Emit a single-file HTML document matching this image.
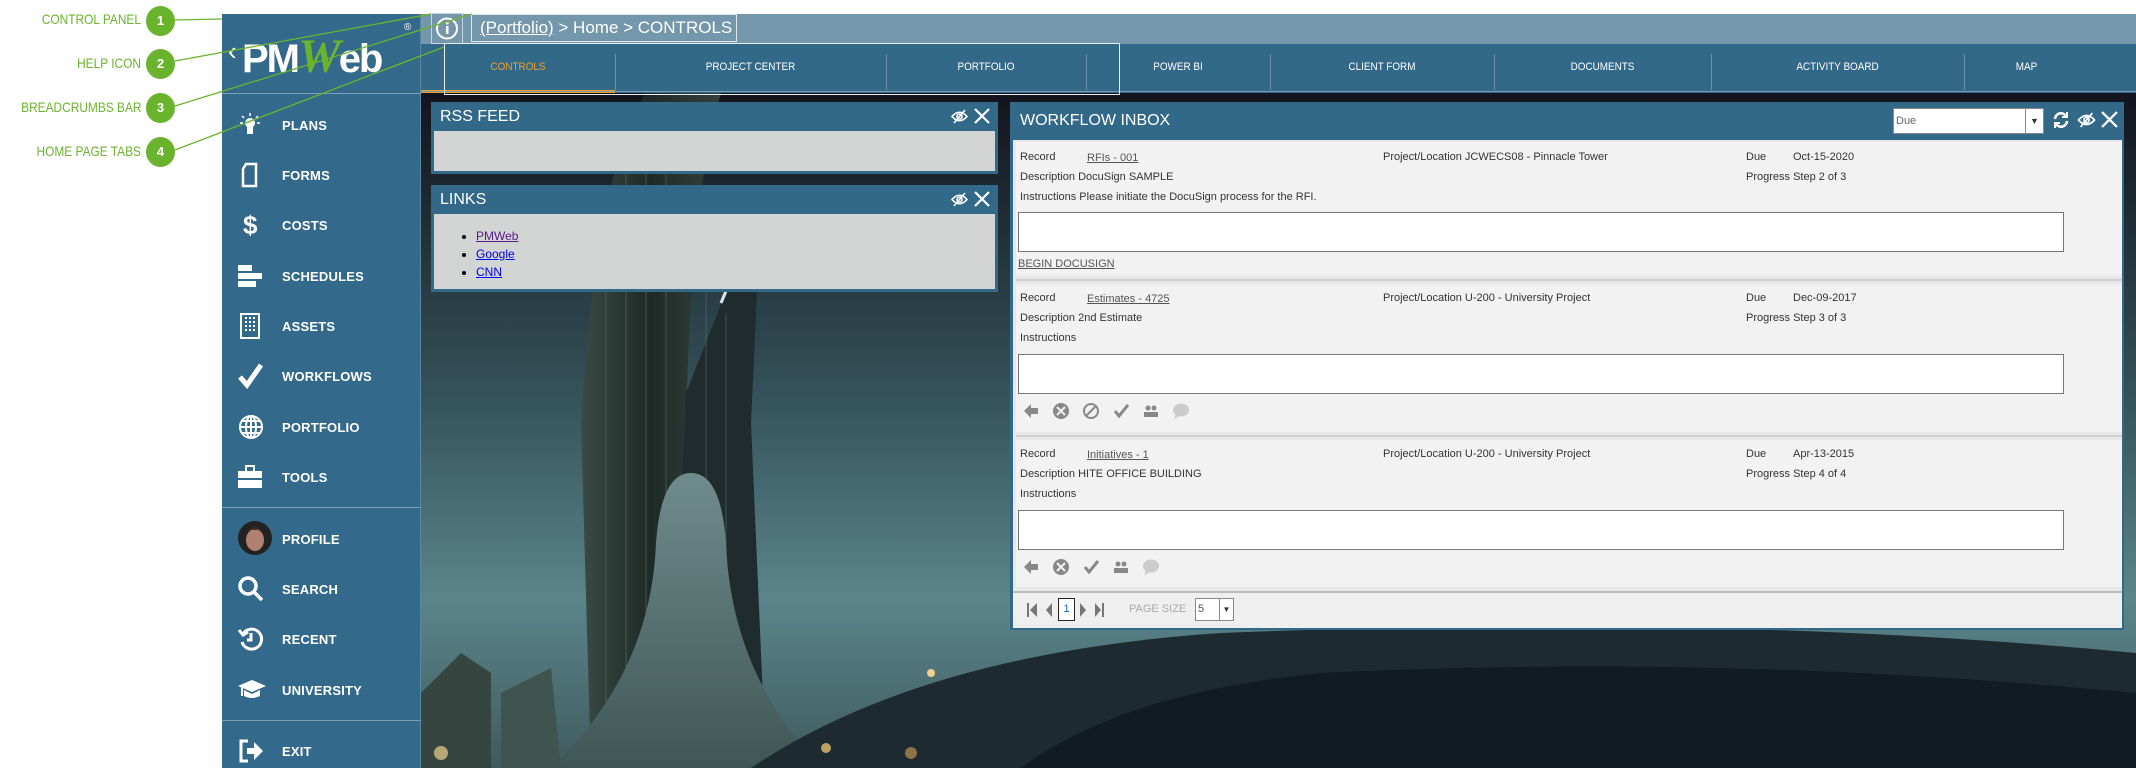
<!DOCTYPE html>
<html><head><meta charset="utf-8">
<style>
*{box-sizing:border-box;margin:0;padding:0}
body{width:2136px;height:774px;background:#fff;position:relative;overflow:hidden;font-family:"Liberation Sans",sans-serif}
.abs{position:absolute}
.ann{position:absolute;color:#6ab42d;font-size:14px;text-align:right;width:141px;left:0;transform:scaleX(.85);transform-origin:right center;white-space:nowrap}
.circ{position:absolute;left:146px;width:29px;height:30px;border-radius:50%;background:#6ab42d;color:#fff;font-weight:bold;font-size:13px;text-align:center;line-height:30px}
#side{left:222px;top:14px;width:199px;height:754px;background:#336a8b;border-right:1px solid #5b87a3}
.mi{position:absolute;left:0;width:199px;height:20px;color:#fff;font-size:13px;font-weight:bold;letter-spacing:.2px}
.mi span{position:absolute;left:60px;top:3px}
.mi svg{position:absolute;left:16px;top:-3px}
.sep{position:absolute;left:0;width:199px;height:1px;background:#7f9fb5}
#bc{left:421px;top:14px;width:1715px;height:30px;background:#7497ab}
#tabs{left:421px;top:44px;width:1715px;height:49px;background:#326888}
.tab{position:absolute;top:0;height:46px;line-height:46px;color:#fff;font-size:11px;text-align:center;transform:scaleX(.9)}
.tsep{position:absolute;top:10px;width:1px;height:36px;background:#6a92ac}
#bg{left:421px;top:93px;width:1715px;height:675px;overflow:hidden}
.ph{background:#326888;color:#fff;font-size:16px;padding-left:9px;position:relative}
.lbl{position:absolute;font-size:11px;color:#333}
.lnk{color:#555;text-decoration:underline}
.ta{position:absolute;left:1018px;width:1046px;height:40px;background:#fff;border:1px solid #777}
</style></head><body>

<div class="ann" style="top:11px">CONTROL PANEL</div>
<div class="ann" style="top:55px">HELP ICON</div>
<div class="ann" style="top:99px">BREADCRUMBS BAR</div>
<div class="ann" style="top:143px">HOME PAGE TABS</div>
<div class="circ" style="top:6px">1</div>
<div class="circ" style="top:49px">2</div>
<div class="circ" style="top:93px">3</div>
<div class="circ" style="top:137px">4</div>

<div id="bg" class="abs">
<svg width="1715" height="675" viewBox="0 0 1715 675">
<defs>
<linearGradient id="sky" x1="0" y1="0" x2="0" y2="1">
<stop offset="0" stop-color="#14141e"/><stop offset=".15" stop-color="#1c2830"/><stop offset=".45" stop-color="#35525a"/><stop offset=".75" stop-color="#5b858b"/><stop offset="1" stop-color="#3f5b5e"/></linearGradient>
<linearGradient id="tw" x1="0" y1="0" x2="1" y2="0"><stop offset="0" stop-color="#3a4a44"/><stop offset=".5" stop-color="#1e2a26"/><stop offset="1" stop-color="#34423c"/></linearGradient>
<linearGradient id="base" x1="0" y1="0" x2="0" y2="1"><stop offset="0" stop-color="#6f8c8c"/><stop offset="1" stop-color="#3f5656"/></linearGradient>
</defs>
<rect width="1715" height="675" fill="url(#sky)"/>
<path d="M170 675 L160 330 Q175 80 225 0 L300 0 Q270 100 265 330 L280 675Z" fill="url(#tw)"/>
<path d="M250 675 L265 300 L340 110 L330 330 L345 675Z" fill="#1f2b2c"/>
<path d="M342 110 L300 210" stroke="#d8e8e8" stroke-width="3"/>
<g stroke="#6a7a6a" stroke-width="1" opacity=".5"><path d="M185 120V675M205 80V675M225 40V675M245 20V675M285 200V675M305 220V675"/></g>
<path d="M130 675 Q230 580 235 450 Q240 380 270 380 Q300 380 305 450 Q310 580 400 675Z" fill="url(#base)"/>
<path d="M0 600 L40 560 L70 580 L70 675 L0 675Z" fill="#34463f"/>
<path d="M80 600 L130 575 L140 675 L80 675Z" fill="#3f544e"/>
<path d="M330 675 Q500 560 800 540 Q1300 520 1715 560 L1715 675Z" fill="#1d2b30"/>
<path d="M600 675 Q700 600 900 580 Q1300 560 1715 600 L1715 675Z" fill="#111b22"/>
<circle cx="405" cy="655" r="5" fill="#e8c070" opacity=".8"/>
<circle cx="510" cy="580" r="4" fill="#f0d090"/>
<circle cx="490" cy="660" r="6" fill="#c09050" opacity=".7"/>
<circle cx="20" cy="660" r="7" fill="#f0d090" opacity=".7"/>
</svg>
</div>

<div id="side" class="abs">
<div class="abs" style="left:6px;top:22px;color:#fff;font-size:26px">&#8249;</div>
<div class="abs" style="left:20px;top:15px;color:#fff;font-size:40px;font-weight:bold;letter-spacing:-2px">PM<span style="color:#6ab42d;font-style:italic;font-family:'Liberation Serif',serif;font-size:48px">W</span>eb</div>
<div class="abs" style="left:182px;top:8px;color:#fff;font-size:10px">®</div>
<div class="sep" style="top:79px"></div>
<div class="mi" style="top:101px"><svg width="24" height="26" viewBox="0 0 24 26" fill="#fff"><circle cx="12" cy="11" r="5"/><rect x="9" y="15" width="6" height="7"/><path d="M12 1v3M4 4l2 2M20 4l-2 2M2 11h3M19 11h3" stroke="#fff" stroke-width="1.5"/></svg><span>PLANS</span></div>
<div class="mi" style="top:151px"><svg width="24" height="26" viewBox="0 0 24 26"><path d="M8 2h10v22H5V7z" fill="none" stroke="#fff" stroke-width="2.5"/></svg><span>FORMS</span></div>
<div class="mi" style="top:201px"><svg width="24" height="26" viewBox="0 0 24 26"><text x="5" y="22" fill="#fff" font-size="26" font-weight="bold" font-family="Liberation Sans">$</text></svg><span>COSTS</span></div>
<div class="mi" style="top:252px"><svg width="24" height="26" viewBox="0 0 24 26" fill="#fff"><rect x="0" y="2" width="14" height="6"/><rect x="0" y="10" width="24" height="6"/><rect x="0" y="18" width="18" height="6"/></svg><span>SCHEDULES</span></div>
<div class="mi" style="top:302px"><svg width="24" height="26" viewBox="0 0 24 26"><rect x="3" y="1" width="18" height="24" fill="none" stroke="#fff" stroke-width="2"/><path d="M7 5h2M11 5h2M15 5h2M7 9h2M11 9h2M15 9h2M7 13h2M11 13h2M15 13h2M7 17h2M11 17h2M15 17h2" stroke="#fff" stroke-width="2"/></svg><span>ASSETS</span></div>
<div class="mi" style="top:352px"><svg width="26" height="26" viewBox="0 0 26 26"><path d="M2 14l7 8L23 2" fill="none" stroke="#fff" stroke-width="5"/></svg><span>WORKFLOWS</span></div>
<div class="mi" style="top:403px"><svg width="26" height="26" viewBox="0 0 26 26" fill="none" stroke="#fff" stroke-width="2"><circle cx="13" cy="13" r="11"/><ellipse cx="13" cy="13" rx="5" ry="11"/><path d="M2 13h22M4 7h18M4 19h18M13 2v22"/></svg><span>PORTFOLIO</span></div>
<div class="mi" style="top:453px"><svg width="26" height="26" viewBox="0 0 26 26" fill="#fff"><rect x="0" y="7" width="24" height="17"/><rect x="8" y="2" width="8" height="6" fill="none" stroke="#fff" stroke-width="2"/><rect x="0" y="14" width="24" height="2" fill="#336a8b"/></svg><span>TOOLS</span></div>
<div class="sep" style="top:493px"></div>
<div class="mi" style="top:515px"><svg width="36" height="36" viewBox="0 0 36 36" style="left:16px;top:-8px"><circle cx="17" cy="17" r="17" fill="#222"/><ellipse cx="17" cy="19" rx="9" ry="11" fill="#b08070"/><path d="M7 12Q17 0 27 12Q22 8 17 9Q11 8 7 12Z" fill="#3a2a20"/></svg><span>PROFILE</span></div>
<div class="mi" style="top:565px"><svg width="26" height="26" viewBox="0 0 26 26" fill="none" stroke="#fff" stroke-width="3.5"><circle cx="10" cy="10" r="8"/><path d="M16 16l8 8"/></svg><span>SEARCH</span></div>
<div class="mi" style="top:615px"><svg width="26" height="26" viewBox="0 0 26 26" fill="none" stroke="#fff" stroke-width="3"><path d="M5 8A10 10 0 1 1 4 16"/><path d="M1 4l4 5 5-3" /><path d="M13 7v7h-4"/></svg><span>RECENT</span></div>
<div class="mi" style="top:666px"><svg width="28" height="26" viewBox="0 0 28 26" fill="#fff"><path d="M0 9l14-6 14 6-14 6z"/><path d="M6 13v6q8 4 16 0v-6l-8 4z"/><path d="M4 10v9" stroke="#fff" stroke-width="2"/></svg><span>UNIVERSITY</span></div>
<div class="sep" style="top:706px"></div>
<div class="mi" style="top:727px"><svg width="26" height="26" viewBox="0 0 26 26"><path d="M10 3H3v20h7" fill="none" stroke="#fff" stroke-width="3"/><path d="M9 10h7V4l9 9-9 9v-6H9z" fill="#fff"/></svg><span>EXIT</span></div>
</div>

<div id="bc" class="abs"></div>
<div class="abs" style="left:431px;top:13px;width:32px;height:31px;border:1px solid #c8d6df"></div>
<svg class="abs" style="left:435px;top:16px" width="24" height="25" viewBox="0 0 24 25"><circle cx="12" cy="12.5" r="10" fill="none" stroke="#fff" stroke-width="2"/><rect x="11" y="10" width="2.5" height="8" fill="#fff"/><circle cx="12.2" cy="7" r="1.5" fill="#fff"/></svg>
<div class="abs" style="left:471px;top:14px;width:266px;height:28px;border:1px solid #dfe7ec;color:#fff;font-size:17px;line-height:26px;padding-left:8px;white-space:nowrap"><u>(Portfolio)</u> &gt; Home &gt; CONTROLS</div>

<div id="tabs" class="abs">
<div class="tab" style="left:0;width:194px;color:#f0a030">CONTROLS</div>
<div class="abs" style="left:0;top:46px;width:194px;height:3px;background:#f0a030"></div>
<div class="tsep" style="left:194px"></div>
<div class="tab" style="left:194px;width:271px">PROJECT CENTER</div>
<div class="tsep" style="left:465px"></div>
<div class="tab" style="left:465px;width:200px">PORTFOLIO</div>
<div class="tsep" style="left:665px"></div>
<div class="tab" style="left:665px;width:184px">POWER BI</div>
<div class="tsep" style="left:849px"></div>
<div class="tab" style="left:849px;width:224px">CLIENT FORM</div>
<div class="tsep" style="left:1073px"></div>
<div class="tab" style="left:1073px;width:217px">DOCUMENTS</div>
<div class="tsep" style="left:1290px"></div>
<div class="tab" style="left:1290px;width:253px">ACTIVITY BOARD</div>
<div class="tsep" style="left:1543px"></div>
<div class="tab" style="left:1543px;width:125px">MAP</div>
<div class="abs" style="left:0;top:47px;width:1715px;height:1px;background:#7b9cb2"></div>
</div>
<div class="abs" style="left:444px;top:43px;width:676px;height:52px;border:1px solid #e8eef2"></div>

<svg class="abs" style="left:0;top:0" width="760" height="200"><g stroke="#6ab42d" stroke-width="1.3" fill="none"><path d="M175 20L222 19"/><path d="M175 61L431 14"/><path d="M175 106L472 14"/><path d="M175 150L444 47"/></g></svg>

<div class="abs" style="left:431px;top:102px;width:567px;height:72px;background:#326888;padding:0 3px 3px 3px">
<div class="ph" style="height:29px;line-height:29px;margin:0 -3px">RSS FEED
<svg class="abs" style="right:30px;top:7px" width="17" height="15" viewBox="0 0 17 15" fill="none" stroke="#fff" stroke-width="1.6"><path d="M1 7.5Q8.5 -1 16 7.5Q8.5 16 1 7.5Z"/><circle cx="8.5" cy="7.5" r="2.5"/><path d="M3 14L14 1"/></svg><svg class="abs" style="right:8px;top:6px" width="16" height="16" viewBox="0 0 16 16"><path d="M1 1L15 15M15 1L1 15" stroke="#fff" stroke-width="2.2"/></svg></div>
<div style="background:#d3d4d4;height:40px"></div></div>

<div class="abs" style="left:431px;top:185px;width:567px;height:107px;background:#326888;padding:0 3px 3px 3px">
<div class="ph" style="height:29px;line-height:29px;margin:0 -3px">LINKS
<svg class="abs" style="right:30px;top:7px" width="17" height="15" viewBox="0 0 17 15" fill="none" stroke="#fff" stroke-width="1.6"><path d="M1 7.5Q8.5 -1 16 7.5Q8.5 16 1 7.5Z"/><circle cx="8.5" cy="7.5" r="2.5"/><path d="M3 14L14 1"/></svg><svg class="abs" style="right:8px;top:6px" width="16" height="16" viewBox="0 0 16 16"><path d="M1 1L15 15M15 1L1 15" stroke="#fff" stroke-width="2.2"/></svg></div>
<div style="background:#d3d4d4;height:75px;font-size:12px;padding:13px 0 0 42px;line-height:18px">
<ul><li><a style="color:#551a8b;text-decoration:underline">PMWeb</a></li><li><a style="color:#0000ee;text-decoration:underline">Google</a></li><li><a style="color:#0000ee;text-decoration:underline">CNN</a></li></ul></div></div>

<div class="abs" style="left:1010px;top:102px;width:1114px;height:528px;background:#326888"></div>
<div class="abs" style="left:1020px;top:112px;color:#fff;font-size:16px">WORKFLOW INBOX</div>
<div class="abs" style="left:1893px;top:108px;width:151px;height:26px;background:#fff;border:1px solid #888;font-size:11px;color:#666;line-height:24px;padding-left:2px">Due<div class="abs" style="right:0;top:0;width:18px;height:24px;border-left:1px solid #888;text-align:center;font-size:9px;color:#333">▼</div></div>
<svg class="abs" style="left:2052px;top:111px" width="18" height="18" viewBox="0 0 18 18" fill="none" stroke="#fff" stroke-width="2.6"><path d="M3 8A6 6 0 0 1 14 5"/><path d="M15 10A6 6 0 0 1 4 13"/><path d="M15 1v5h-5M3 17v-5h5" stroke-width="2"/></svg>
<svg class="abs" style="left:2077px;top:112px" width="19" height="16" viewBox="0 0 17 15" fill="none" stroke="#fff" stroke-width="1.6"><path d="M1 7.5Q8.5 -1 16 7.5Q8.5 16 1 7.5Z"/><circle cx="8.5" cy="7.5" r="2.5"/><path d="M3 14L14 1"/></svg>
<svg class="abs" style="left:2101px;top:111px" width="17" height="17" viewBox="0 0 16 16"><path d="M1 1L15 15M15 1L1 15" stroke="#fff" stroke-width="2.2"/></svg>
<div class="abs" style="left:1013px;top:140px;width:1109px;height:488px;background:#e8e8e8"></div>

<div class="abs" style="left:1016px;top:142px;width:1106px;height:134px;background:#f2f2f2"></div>
<div class="abs" style="left:1016px;top:279px;width:1106px;height:2px;background:#d0d0d0"></div>
<div class="abs" style="left:1016px;top:284px;width:1106px;height:148px;background:#f2f2f2"></div>
<div class="abs" style="left:1016px;top:435px;width:1106px;height:2px;background:#d0d0d0"></div>
<div class="abs" style="left:1016px;top:440px;width:1106px;height:147px;background:#f2f2f2"></div>
<div class="abs" style="left:1013px;top:591px;width:1109px;height:2px;background:#bbb"></div>
<div class="abs" style="left:1013px;top:593px;width:1109px;height:35px;background:#efefef"></div>

<div class="lbl" style="left:1020px;top:151px">Record</div><div class="lbl lnk" style="left:1087px;top:152px">RFIs - 001</div>
<div class="lbl" style="left:1383px;top:151px">Project/Location JCWECS08 - Pinnacle Tower</div>
<div class="lbl" style="left:1746px;top:151px">Due</div><div class="lbl" style="left:1793px;top:151px">Oct-15-2020</div>
<div class="lbl" style="left:1020px;top:171px">Description DocuSign SAMPLE</div>
<div class="lbl" style="left:1746px;top:171px">Progress Step 2 of 3</div>
<div class="lbl" style="left:1020px;top:191px">Instructions Please initiate the DocuSign process for the RFI.</div>
<div class="ta" style="top:212px"></div>
<div class="lbl lnk" style="left:1018px;top:258px">BEGIN DOCUSIGN</div>

<div class="lbl" style="left:1020px;top:292px">Record</div><div class="lbl lnk" style="left:1087px;top:293px">Estimates - 4725</div>
<div class="lbl" style="left:1383px;top:292px">Project/Location U-200 - University Project</div>
<div class="lbl" style="left:1746px;top:292px">Due</div><div class="lbl" style="left:1793px;top:292px">Dec-09-2017</div>
<div class="lbl" style="left:1020px;top:312px">Description 2nd Estimate</div>
<div class="lbl" style="left:1746px;top:312px">Progress Step 3 of 3</div>
<div class="lbl" style="left:1020px;top:332px">Instructions</div>
<div class="ta" style="top:354px"></div>
<svg class="abs" style="left:1022px;top:402px" width="175" height="18" viewBox="0 0 175 18">
<path d="M2 9l7-7v4h7v6H9v4z" fill="#888"/>
<circle cx="39" cy="9" r="8" fill="#888"/><path d="M35 5l8 8M43 5l-8 8" stroke="#f2f2f2" stroke-width="2"/>
<circle cx="69" cy="9" r="7" fill="none" stroke="#888" stroke-width="2"/><path d="M64 14l10-10" stroke="#888" stroke-width="2"/>
<path d="M93 9l4 5 9-11" fill="none" stroke="#888" stroke-width="3"/>
<circle cx="126" cy="6" r="2.5" fill="#888"/><circle cx="132" cy="6" r="2.5" fill="#888"/><rect x="122" y="10" width="14" height="5" fill="#888"/>
<ellipse cx="159" cy="8" rx="8" ry="6.5" fill="#ccc"/><path d="M154 12l-2 5 6-3z" fill="#ccc"/>
</svg>

<div class="lbl" style="left:1020px;top:448px">Record</div><div class="lbl lnk" style="left:1087px;top:449px">Initiatives - 1</div>
<div class="lbl" style="left:1383px;top:448px">Project/Location U-200 - University Project</div>
<div class="lbl" style="left:1746px;top:448px">Due</div><div class="lbl" style="left:1793px;top:448px">Apr-13-2015</div>
<div class="lbl" style="left:1020px;top:468px">Description HITE OFFICE BUILDING</div>
<div class="lbl" style="left:1746px;top:468px">Progress Step 4 of 4</div>
<div class="lbl" style="left:1020px;top:488px">Instructions</div>
<div class="ta" style="top:510px"></div>
<svg class="abs" style="left:1022px;top:558px" width="175" height="18" viewBox="0 0 175 18">
<path d="M2 9l7-7v4h7v6H9v4z" fill="#888"/>
<circle cx="39" cy="9" r="8" fill="#888"/><path d="M35 5l8 8M43 5l-8 8" stroke="#f2f2f2" stroke-width="2"/>
<path d="M63 9l4 5 9-11" fill="none" stroke="#888" stroke-width="3"/>
<circle cx="96" cy="6" r="2.5" fill="#888"/><circle cx="102" cy="6" r="2.5" fill="#888"/><rect x="92" y="10" width="14" height="5" fill="#888"/>
<ellipse cx="129" cy="8" rx="8" ry="6.5" fill="#ccc"/><path d="M124 12l-2 5 6-3z" fill="#ccc"/>
</svg>

<svg class="abs" style="left:1025px;top:601px" width="90" height="18" viewBox="0 0 90 18" fill="#777">
<rect x="2" y="2" width="2" height="14"/><path d="M12 2v14L5 9z"/><path d="M27 2v14l-6-7z"/>
<path d="M55 2v14l6-7z"/><path d="M70 2v14l6-7z"/><rect x="77" y="2" width="2" height="14"/></svg>
<div class="abs" style="left:1058px;top:598px;width:17px;height:23px;border:1px solid #222;background:#fff;font-size:11px;color:#06c;text-align:center;line-height:21px">1</div>
<div class="abs" style="left:1129px;top:603px;font-size:11px;color:#aaa">PAGE SIZE</div>
<div class="abs" style="left:1195px;top:598px;width:39px;height:23px;border:1px solid #888;background:#fff;font-size:11px;color:#555;line-height:21px;padding-left:2px">5<div class="abs" style="right:0;top:0;width:14px;height:21px;border-left:1px solid #888;font-size:8px;text-align:center;color:#333">▼</div></div>

</body></html>
